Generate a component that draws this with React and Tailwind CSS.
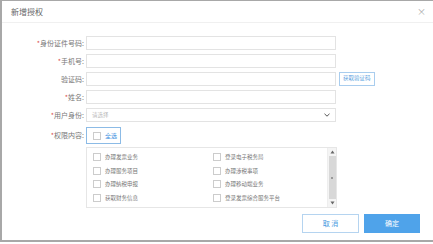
import React from "react";

const fields = [
  { label: "身份证件号码", req: true },
  { label: "手机号", req: true },
  { label: "验证码", req: false, code: true },
  { label: "姓名", req: true },
];

const perms = [
  ["办理发票业务", "登录电子税务局"],
  ["办理服务项目", "办理涉税事项"],
  ["办理纳税申报", "办理移动端业务"],
  ["获取财务信息", "登录发票综合服务平台"],
];

const Label = ({ text, req }) => (
  <div className="w-[84px] shrink-0 pr-[2px] text-right text-[7px] text-[#777]">
    {req && <span className="text-[#d9534f]">*</span>}
    {text}:
  </div>
);

const Box = () => (
  <span className="inline-block w-[8px] h-[8px] border border-[#ccc] bg-white shrink-0" />
);

const App = () => {
  return (
    <div
      className="w-[433px] h-[244px] bg-white relative overflow-hidden"
      style={{ fontFamily: '"Noto Sans CJK SC", "Liberation Sans", sans-serif' }}
    >
      <div className="h-[242px] border-l-2 border-t border-b-2 border-[#a8a8a8] flex flex-col">
        <div className="h-[22px] flex items-center justify-between pl-[9px] pr-[7px] border-b border-[#f0f0f0]">
          <span className="text-[8px] text-[#666]">新增授权</span>
          <span className="text-[9px] text-[#aaa]">×</span>
        </div>
        <div className="flex flex-col pt-[13px] gap-[4px]">
          {fields.map((f) => (
            <div key={f.label} className="flex items-center h-[14px]">
              <Label text={f.label} req={f.req} />
              <div className="w-[250px] h-[14px] border border-[#e3e3e3]" />
              {f.code && (
                <button className="ml-[3px] h-[14px] px-[3px] border border-[#a9cdee] text-[5.5px] text-[#5b9fe0] leading-none">
                  获取验证码
                </button>
              )}
            </div>
          ))}
          <div className="flex items-center h-[14px]">
            <Label text="用户身份" req />
            <div className="w-[250px] h-[14px] border border-[#e3e3e3] flex items-center justify-between px-[5px]">
              <span className="text-[5.5px] text-[#bbb]">请选择</span>
              <svg width="6" height="4" viewBox="0 0 6 4">
                <path d="M0.5 0.8 L3 3.2 L5.5 0.8" fill="none" stroke="#555" strokeWidth="1" />
              </svg>
            </div>
          </div>
          <div className="flex items-center h-[17px] mt-[1px]">
            <Label text="权限内容" req />
            <div className="w-[35px] h-[17px] border border-[#8cbbe6] flex items-center gap-[4px] pl-[6px]">
              <Box />
              <span className="text-[6px] text-[#3a8ee0]">全选</span>
            </div>
          </div>
          <div className="flex -mt-[1px]">
            <div className="w-[84px] shrink-0" />
            <div className="w-[251px] h-[61px] border border-[#e6e6e6] flex">
              <div className="flex-1 flex flex-col justify-evenly pl-[6px]">
                {perms.map((row) => (
                  <div key={row[0]} className="flex items-center">
                    <div className="w-[120px] flex items-center gap-[4px]">
                      <Box />
                      <span className="text-[5.5px] text-[#777]">{row[0]}</span>
                    </div>
                    <div className="flex items-center gap-[4px]">
                      <Box />
                      <span className="text-[5.5px] text-[#777]">{row[1]}</span>
                    </div>
                  </div>
                ))}
              </div>
              <div className="w-[9px] bg-[#f4f4f4] border-l border-[#eee] flex flex-col items-center justify-between py-[2px]">
                <svg width="5" height="4" viewBox="0 0 5 4">
                  <path d="M0.5 3.5 L2.5 0.5 L4.5 3.5 Z" fill="#666" />
                </svg>
                <div className="w-[7px] flex-1 my-[2px] bg-[#d8d8d8] flex items-center justify-center">
                  <div className="w-[2px] h-[2px] bg-[#999]" />
                </div>
                <svg width="5" height="4" viewBox="0 0 5 4">
                  <path d="M0.5 0.5 L2.5 3.5 L4.5 0.5 Z" fill="#666" />
                </svg>
              </div>
            </div>
          </div>
        </div>
        <div className="flex justify-end gap-[5px] pr-[13px] mt-[6px]">
          <button className="w-[57px] h-[19px] border border-[#b5d4f0] bg-white text-[7px] text-[#4a9be0]">
            取 消
          </button>
          <button className="w-[56px] h-[19px] bg-[#4fa3ea] text-[7px] text-white">
            确定
          </button>
        </div>
      </div>
    </div>
  );
};

export default App;
